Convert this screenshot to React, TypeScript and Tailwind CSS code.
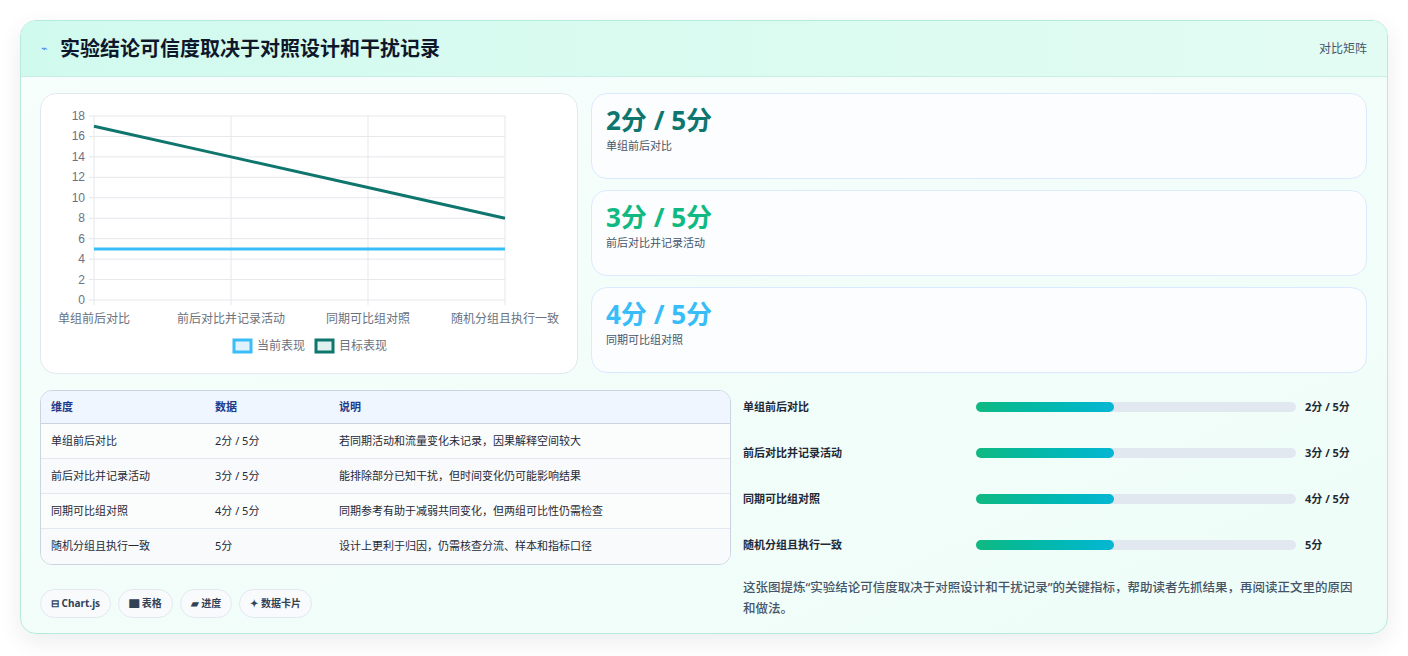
import React from 'react';

const rows = [
  { name: '单组前后对比', value: '2分 / 5分', note: '若同期活动和流量变化未记录，因果解释空间较大' },
  { name: '前后对比并记录活动', value: '3分 / 5分', note: '能排除部分已知干扰，但时间变化仍可能影响结果' },
  { name: '同期可比组对照', value: '4分 / 5分', note: '同期参考有助于减弱共同变化，但两组可比性仍需检查' },
  { name: '随机分组且执行一致', value: '5分', note: '设计上更利于归因，仍需核查分流、样本和指标口径' },
];

const stats = [
  { v: '2分 / 5分', l: '单组前后对比', c: 'text-[#0f766e]' },
  { v: '3分 / 5分', l: '前后对比并记录活动', c: 'text-[#10b981]' },
  { v: '4分 / 5分', l: '同期可比组对照', c: 'text-[#38bdf8]' },
];

function Chart() {
  const L = 53, R = 464, T = 22, B = 206;
  const y = (v: number) => B - (v / 18) * (B - T);
  const xs = [0, 1, 2, 3].map((i) => L + (i * (R - L)) / 3);
  const target = [17, 14, 11, 8];
  const cats = ['单组前后对比', '前后对比并记录活动', '同期可比组对照', '随机分组且执行一致'];
  return (
    <svg width="538" height="281" className="block" style={{ fontFamily: '"Liberation Sans","Noto Sans CJK SC",sans-serif' }}>
      {[0, 2, 4, 6, 8, 10, 12, 14, 16, 18].map((v) => (
        <g key={v}>
          <line x1={L - 5} x2={R} y1={y(v)} y2={y(v)} stroke="#e5e7eb" />
          <text x={L - 9} y={y(v) + 4} textAnchor="end" fontSize="12" fill="#6b7280">{v}</text>
        </g>
      ))}
      {xs.map((x, i) => (
        <g key={i}>
          <line x1={x} x2={x} y1={T} y2={B + 5} stroke="#e5e7eb" />
          <text x={x} y={229} textAnchor="middle" fontSize="12" fill="#6b7280">{cats[i]}</text>
        </g>
      ))}
      <line x1={L} x2={R} y1={y(5)} y2={y(5)} stroke="#38bdf8" strokeWidth="3" />
      <polyline points={xs.map((x, i) => `${x},${y(target[i])}`).join(' ')} fill="none" stroke="#0f766e" strokeWidth="3" />
      <rect x="193" y="246" width="17" height="12" fill="#e0f2fe" stroke="#38bdf8" strokeWidth="3" />
      <text x="216" y="256" fontSize="12" fill="#6b7280">当前表现</text>
      <rect x="275" y="246" width="17" height="12" fill="#dff1ee" stroke="#0f766e" strokeWidth="3" />
      <text x="298" y="256" fontSize="12" fill="#6b7280">目标表现</text>
    </svg>
  );
}

export default function App() {
  return (
    <div className="w-[1408px] h-[656px] bg-white px-5 pt-5" style={{ fontFamily: '"Noto Sans","Noto Sans CJK SC",sans-serif' }}>
      <div className="h-[614px] rounded-2xl border border-[#b5eadc] bg-gradient-to-br from-[#f7fefc] to-[#eefdf8] shadow-[0_8px_24px_rgba(15,23,42,0.08)] overflow-hidden">
        <div className="h-[56px] flex items-center justify-between px-5 bg-gradient-to-r from-[#d1faee] to-[#e3fcf3] border-b border-[#c9efe4]">
          <div className="flex items-center gap-3">
            <span className="text-[11px] text-[#3b82f6]">⌁</span>
            <h1 className="text-[20px] font-bold text-[#0f172a]">实验结论可信度取决于对照设计和干扰记录</h1>
          </div>
          <span className="text-[12px] text-[#475569]">对比矩阵</span>
        </div>
        <div className="pl-[19px] pr-5 pt-4 flex gap-[13px]">
          <div className="w-[538px] h-[281px] rounded-2xl border border-[#e2e8f0] bg-white">
            <Chart />
          </div>
          <div className="flex-1 flex flex-col gap-[11px]">
            {stats.map((s) => (
              <div key={s.l} className="h-[86px] rounded-2xl border border-[#dbeafe] bg-[#fbfdff] px-[14px] pt-2">
                <div className={`text-[26px] font-bold leading-[36px] ${s.c}`}>{s.v}</div>
                <div className="text-[11px] text-[#475569]">{s.l}</div>
              </div>
            ))}
          </div>
        </div>
        <div className="pl-[19px] pr-5 pt-4 flex gap-[12px]">
          <div className="w-[691px]">
            <div className="rounded-xl border border-[#cbd5e1] overflow-hidden text-[11px]">
              <div className="flex h-[33px] items-center bg-[#eff6ff] border-b border-[#cbd5e1] font-bold text-[#1e3a8a]">
                <div className="w-[174px] pl-2.5">维度</div>
                <div className="w-[124px]">数据</div>
                <div className="flex-1">说明</div>
              </div>
              {rows.map((r, i) => (
                <div key={r.name} className={`flex h-[35px] items-center text-[#1f2937] ${i < 3 ? 'border-b border-[#e2e8f0]' : ''} ${i % 2 ? 'bg-[#f8fafc]' : 'bg-[#fbfdfd]'}`}>
                  <div className="w-[174px] pl-2.5">{r.name}</div>
                  <div className="w-[124px]">{r.value}</div>
                  <div className="flex-1">{r.note}</div>
                </div>
              ))}
            </div>
            <div className="flex gap-[7px] mt-6 text-[10px] font-bold text-[#334155]">
              {['⊟ Chart.js', '▇ 表格', '▰ 进度', '✦ 数据卡片'].map((p) => (
                <span key={p} className="h-[29px] px-2.5 flex items-center rounded-full border border-[#e2e8f0] bg-[#f8fafc]">{p}</span>
              ))}
            </div>
          </div>
          <div className="flex-1">
            <div className="flex flex-col">
              {rows.map((r) => (
                <div key={r.name} className="h-[46px] flex items-center text-[11px] font-bold text-[#1f2937] first:-mt-1.5">
                  <div className="w-[233px]">{r.name}</div>
                  <div className="w-[320px] h-[10px] rounded-full bg-[#e2e8f0]">
                    <div className="h-full w-[43%] rounded-full bg-gradient-to-r from-[#10b981] to-[#06b6d4]" />
                  </div>
                  <div className="pl-[9px]">{r.value}</div>
                </div>
              ))}
            </div>
            <p className="mt-[9px] text-[12.5px] font-medium leading-[21px] text-[#475569] pr-1">这张图提炼“实验结论可信度取决于对照设计和干扰记录”的关键指标，帮助读者先抓结果，再阅读正文里的原因和做法。</p>
          </div>
        </div>
      </div>
    </div>
  );
}
